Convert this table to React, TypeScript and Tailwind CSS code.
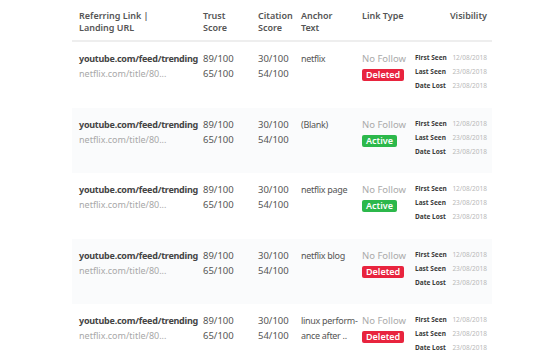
import React from "react";

type Row = {
    anchor: string[];
    status: "Deleted" | "Active";
};

const rows: Row[] = [
    { anchor: ["netflix"], status: "Deleted" },
    { anchor: ["(Blank)"], status: "Active" },
    { anchor: ["netflix page"], status: "Active" },
    { anchor: ["netflix blog"], status: "Deleted" },
    { anchor: ["linux perform-", "ance after .."], status: "Deleted" },
];

const cols = "grid grid-cols-[124px_55px_43px_61px_53px_1fr]";

const Visibility = () => (
    <div className="flex flex-col gap-[5px] pt-[1px]">
        {[
            ["First Seen", "12/08/2018"],
            ["Last Seen", "23/08/2018"],
            ["Date Lost", "23/08/2018"],
        ].map(([label, date]) => (
            <div key={label} className="flex items-center justify-between leading-[9px]">
                <span className="text-[6.5px] font-bold text-[#3a3a3a]">{label}</span>
                <span className="text-[6.5px] text-[#b8b8b8]">{date}</span>
            </div>
        ))}
    </div>
);

export default function App() {
    return (
        <div
            className="w-[560px] h-[360px] bg-white overflow-hidden"
            style={{ fontFamily: "'Noto Sans', 'Open Sans', sans-serif" }}
        >
            <div className="ml-[72px] w-[420px]">
                {/* Header */}
                <div className={cn(cols, "pl-[7px] pr-[5px] pt-[10px] pb-[7px] text-[9px] leading-[11.5px] font-semibold text-[#555] border-b-2 border-[#eeeeee]")}>
                    <div>
                        Referring Link |<br />Landing URL
                    </div>
                    <div>
                        Trust<br />Score
                    </div>
                    <div>
                        Citation<br />Score
                    </div>
                    <div>
                        Anchor<br />Text
                    </div>
                    <div>Link Type</div>
                    <div className="text-right">Visibility</div>
                </div>

                {rows.map((row, i) => (
                    <div
                        key={i}
                        className={cn(
                            cols,
                            "h-[65.5px] pl-[7px] pr-[5px] pt-[10px]",
                            i % 2 === 1 ? "bg-[#fafbfc]" : "bg-white"
                        )}
                    >
                        <div className="flex flex-col gap-[1px] text-[9px] leading-[14px]">
                            <span className="font-bold text-[#444] tracking-[-0.25px] whitespace-nowrap">youtube.com/feed/trending</span>
                            <span className="text-[#a8a8a8]">netflix.com/title/80...</span>
                        </div>
                        <div className="flex flex-col gap-[1px] text-[9.5px] leading-[14px] text-[#555]">
                            <span>89/100</span>
                            <span>65/100</span>
                        </div>
                        <div className="flex flex-col gap-[1px] text-[9.5px] leading-[14px] text-[#555]">
                            <span>30/100</span>
                            <span>54/100</span>
                        </div>
                        <div className="flex flex-col gap-[1px] text-[9px] leading-[14px] text-[#555] tracking-[-0.3px]">
                            {row.anchor.map((a) => (
                                <span key={a} className="whitespace-nowrap">{a}</span>
                            ))}
                        </div>
                        <div className="flex flex-col items-start gap-[3px]">
                            <span className="text-[9.5px] leading-[14px] text-[#aaa] whitespace-nowrap">No Follow</span>
                            <span
                                className={cn(
                                    "rounded-[2px] px-[4px] text-[9px] leading-[12px] font-semibold text-white",
                                    row.status === "Deleted" ? "bg-[#e8243e]" : "bg-[#2cb84b]"
                                )}
                            >
                                {row.status}
                            </span>
                        </div>
                        <Visibility />
                    </div>
                ))}
            </div>
        </div>
    );
}

function cn(...c: (string | false | undefined)[]) {
    return c.filter(Boolean).join(" ");
}
